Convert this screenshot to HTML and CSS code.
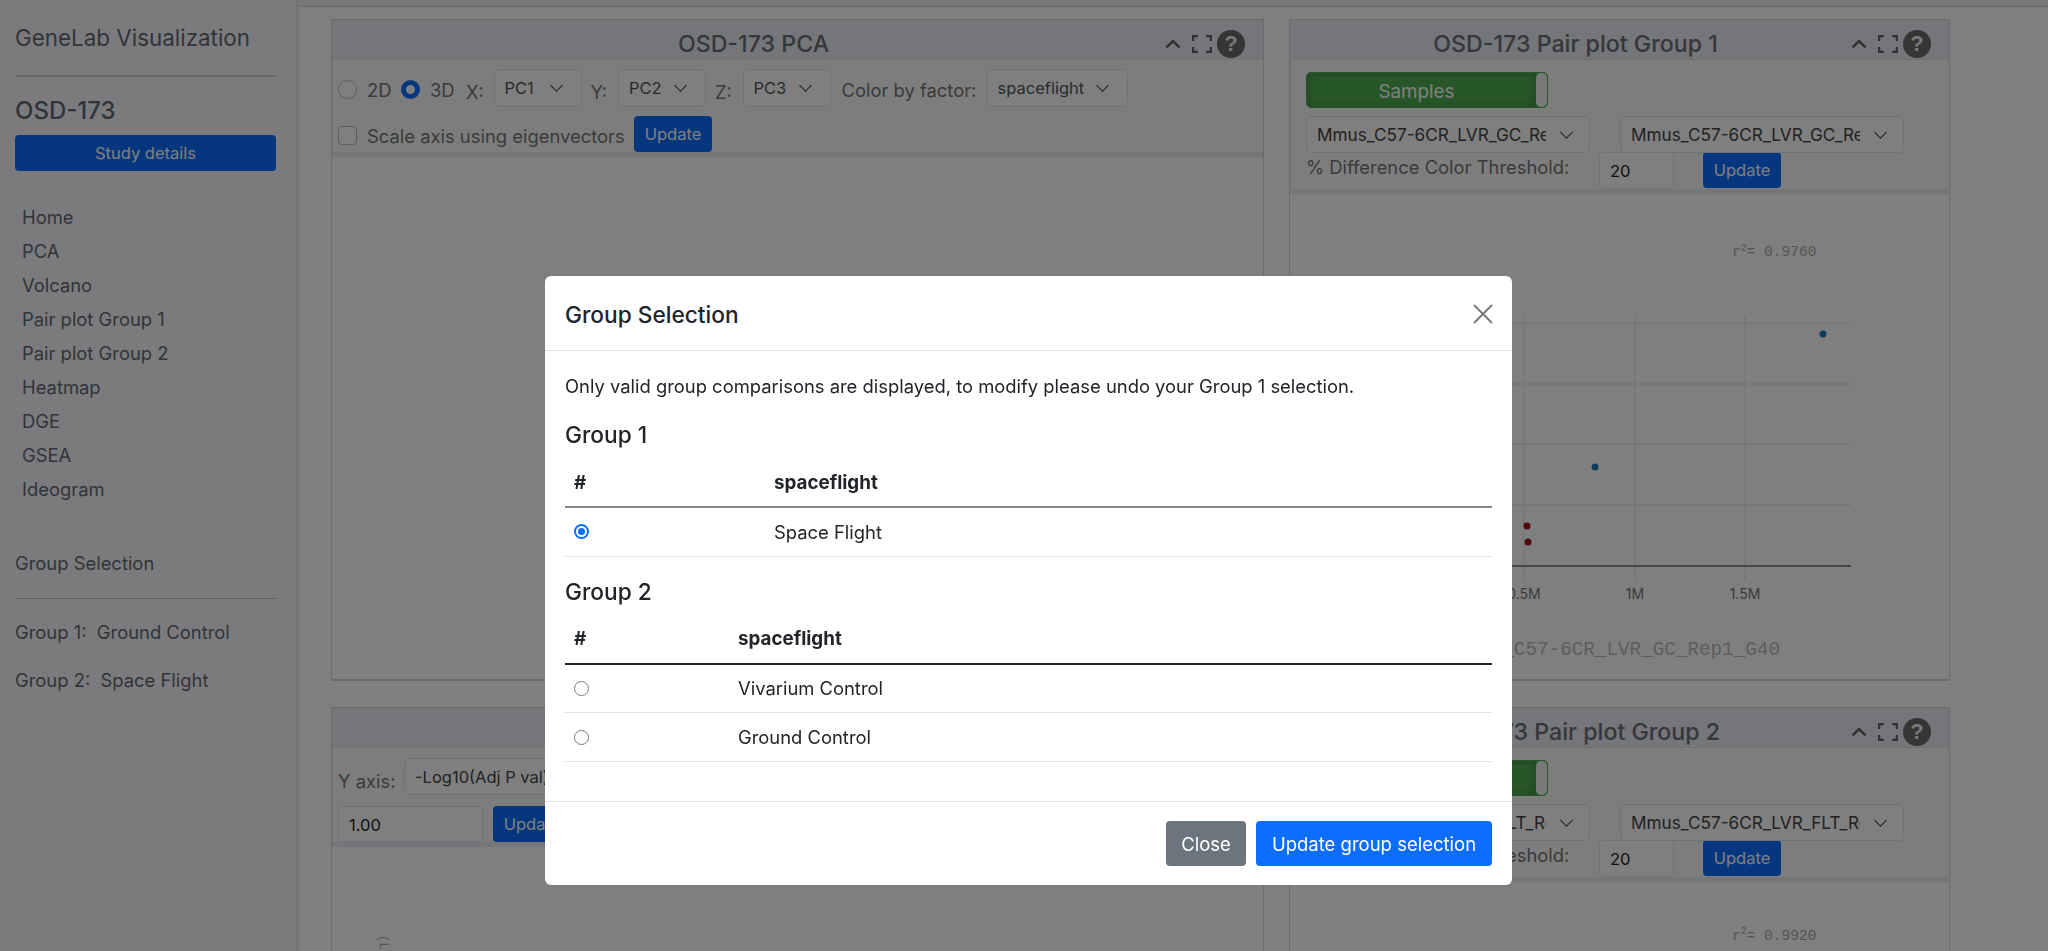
FILE: index.html
```html
<!DOCTYPE html>
<html lang="en">
<head>
    <meta charset="UTF-8">
    <title>GeneLab Visualization</title>
    <link rel="stylesheet" href="styles.css">
</head>
<body>
    <div class="app">
        <nav class="sidebar">
            <div class="brand">GeneLab Visualization</div>
            <hr class="rule">
            <h2 class="study">OSD-173</h2>
            <button class="btn btn-study">Study details</button>
            <ul class="nav-list">
                <li>Home</li>
                <li>PCA</li>
                <li>Volcano</li>
                <li>Pair plot Group 1</li>
                <li>Pair plot Group 2</li>
                <li>Heatmap</li>
                <li>DGE</li>
                <li>GSEA</li>
                <li>Ideogram</li>
            </ul>
            <div class="side-title">Group Selection</div>
            <hr class="rule rule-thin">
            <div class="side-group">Group 1:&nbsp; Ground Control</div>
            <div class="side-group">Group 2:&nbsp; Space Flight</div>
        </nav>

        <main class="content">
            <div class="grid">
                <section class="panel">
                    <header class="panel-head">
                        <span class="panel-title">OSD-173 PCA</span>
                        <span class="panel-icons">
                            <svg class="ico-up" viewBox="0 0 16 10"><path d="M1.5 8.5 8 2l6.5 6.5"/></svg>
                            <svg class="ico-full" viewBox="0 0 20 18"><path d="M1 6V1h5M14 1h5v5M19 12v5h-5M6 17H1v-5"/></svg>
                            <span class="ico-help">?</span>
                        </span>
                    </header>
                    <div class="panel-tools pca-tools">
                        <div class="tool-row">
                            <span class="radio"></span><label class="lbl lbl-2d">2D</label>
                            <span class="radio radio-on"></span><label class="lbl lbl-3d">3D</label>
                            <label class="lbl lbl-axis">X:</label><span class="select s-pc">PC1</span>
                            <label class="lbl lbl-axis">Y:</label><span class="select s-pc">PC2</span>
                            <label class="lbl lbl-axis">Z:</label><span class="select s-pc">PC3</span>
                            <label class="lbl lbl-color">Color by factor:</label><span class="select s-factor">spaceflight</span>
                        </div>
                        <div class="tool-row">
                            <span class="check"></span><label class="lbl lbl-scale">Scale axis using eigenvectors</label>
                            <button class="btn btn-update">Update</button>
                        </div>
                    </div>
                </section>

                <section class="panel">
                    <header class="panel-head">
                        <span class="panel-title">OSD-173 Pair plot Group 1</span>
                        <span class="panel-icons">
                            <svg class="ico-up" viewBox="0 0 16 10"><path d="M1.5 8.5 8 2l6.5 6.5"/></svg>
                            <svg class="ico-full" viewBox="0 0 20 18"><path d="M1 6V1h5M14 1h5v5M19 12v5h-5M6 17H1v-5"/></svg>
                            <span class="ico-help">?</span>
                        </span>
                    </header>
                    <div class="panel-tools pair-tools">
                        <div class="toggle"><span class="toggle-on">Samples</span><span class="toggle-knob"></span></div>
                        <div class="select-row">
                            <span class="select s-sample"><span class="clip">Mmus_C57-6CR_LVR_GC_Rep1_G40</span></span>
                            <span class="select s-sample"><span class="clip">Mmus_C57-6CR_LVR_GC_Rep2_G42</span></span>
                        </div>
                        <div class="thresh-row">
                            <label class="lbl thresh-lbl">% Difference Color Threshold:</label>
                            <span class="input input-small">20</span>
                            <button class="btn btn-update">Update</button>
                        </div>
                    </div>
                    <svg class="plot-svg" viewBox="0 0 660 490">
                        <text x="442" y="62" class="plot-r">r<tspan dy="-5" font-size="10">2</tspan><tspan dy="5">= 0.9760</tspan></text>
                        <path class="plot-grid" d="M180 129H561M180 190H561M180 250H561M180 311H561M234 122V386M345 122V386M455 122V386"/>
                        <path class="plot-axis" d="M180 372H561"/>
                        <circle cx="533" cy="140" r="3.5" class="dot-blue"/>
                        <circle cx="305" cy="273" r="3.5" class="dot-blue"/>
                        <circle cx="237" cy="332" r="3.5" class="dot-red"/>
                        <circle cx="238" cy="348" r="3.5" class="dot-red"/>
                        <text x="234" y="405" class="plot-tick">0.5M</text>
                        <text x="345" y="405" class="plot-tick">1M</text>
                        <text x="455" y="405" class="plot-tick">1.5M</text>
                        <text x="166" y="461" class="plot-name">Mmus_C57-6CR_LVR_GC_Rep1_G40</text>
                    </svg>
                </section>

                <section class="panel">
                    <header class="panel-head">
                        <span class="panel-title">OSD-173 Volcano</span>
                        <span class="panel-icons">
                            <svg class="ico-up" viewBox="0 0 16 10"><path d="M1.5 8.5 8 2l6.5 6.5"/></svg>
                            <svg class="ico-full" viewBox="0 0 20 18"><path d="M1 6V1h5M14 1h5v5M19 12v5h-5M6 17H1v-5"/></svg>
                            <span class="ico-help">?</span>
                        </span>
                    </header>
                    <div class="panel-tools volcano-tools">
                        <div class="tool-row">
                            <label class="lbl lbl-yaxis">Y axis:</label><span class="select s-axis"><span class="clip">-Log10(Adj P val)</span></span>
                        </div>
                        <div class="tool-row">
                            <span class="input input-wide">1.00</span>
                            <button class="btn btn-update">Update</button>
                        </div>
                    </div>
                    <svg class="volcano-svg" viewBox="0 0 60 20">
                        <text x="0" y="0" transform="translate(48 0) rotate(90)" class="plot-side">(L</text>
                    </svg>
                </section>

                <section class="panel">
                    <header class="panel-head">
                        <span class="panel-title">OSD-173 Pair plot Group 2</span>
                        <span class="panel-icons">
                            <svg class="ico-up" viewBox="0 0 16 10"><path d="M1.5 8.5 8 2l6.5 6.5"/></svg>
                            <svg class="ico-full" viewBox="0 0 20 18"><path d="M1 6V1h5M14 1h5v5M19 12v5h-5M6 17H1v-5"/></svg>
                            <span class="ico-help">?</span>
                        </span>
                    </header>
                    <div class="panel-tools pair-tools">
                        <div class="toggle"><span class="toggle-on">Samples</span><span class="toggle-knob"></span></div>
                        <div class="select-row">
                            <span class="select s-sample"><span class="clip">Mmus_C57-6CR_LVR_FLT_Rep1_F1</span></span>
                            <span class="select s-sample"><span class="clip">Mmus_C57-6CR_LVR_FLT_Rep2_F2</span></span>
                        </div>
                        <div class="thresh-row">
                            <label class="lbl thresh-lbl">% Difference Color Threshold:</label>
                            <span class="input input-small">20</span>
                            <button class="btn btn-update">Update</button>
                        </div>
                    </div>
                    <div class="plot-foot">r<sup>2</sup>= 0.9920</div>
                </section>
            </div>
        </main>
    </div>

    <div class="backdrop"></div>

    <div class="modal">
        <header class="modal-head">
            <h3 class="modal-title">Group Selection</h3>
            <svg class="modal-close" viewBox="0 0 20 20"><path d="M1 1l18 18M19 1 1 19"/></svg>
        </header>
        <div class="modal-body">
            <p class="modal-note">Only valid group comparisons are displayed, to modify please undo your Group 1 selection.</p>
            <h4 class="group-title">Group 1</h4>
            <table class="group-table t-one">
                <thead><tr><th class="col-num">#</th><th>spaceflight</th></tr></thead>
                <tbody>
                    <tr><td class="col-num"><span class="mini-radio mini-on"></span></td><td>Space Flight</td></tr>
                </tbody>
            </table>
            <h4 class="group-title">Group 2</h4>
            <table class="group-table t-two">
                <thead><tr><th class="col-num">#</th><th>spaceflight</th></tr></thead>
                <tbody>
                    <tr><td class="col-num"><span class="mini-radio"></span></td><td>Vivarium Control</td></tr>
                    <tr><td class="col-num"><span class="mini-radio"></span></td><td>Ground Control</td></tr>
                </tbody>
            </table>
        </div>
        <footer class="modal-foot">
            <button class="btn btn-close">Close</button>
            <button class="btn btn-primary">Update group selection</button>
        </footer>
    </div>
</body>
</html>
```

FILE: styles.css
```css
* {
    box-sizing: border-box;
}
html, body {
    margin: 0;
    height: 951px;
    overflow: hidden;
}
body {
    font-family: Inter, "Liberation Sans", sans-serif;
    font-size: 18.4px;
    color: #212529;
    background: #fff;
}
.app {
    display: flex;
    height: 951px;
}
.btn {
    border: none;
    border-radius: 4px;
    font-family: inherit;
    color: #fff;
    background: #0d6efd;
}

/* sidebar */
.sidebar {
    width: 299px;
    flex: none;
    padding: 24px 20px 0 15px;
    color: #616a72;
    background: #f6f7fb;
    border-right: 3px solid #e3e4e8;
}
.brand {
    font-size: 22.4px;
    line-height: 28px;
    white-space: nowrap;
}
.rule {
    margin: 23px 0 0;
    border: none;
    border-top: 2px solid #d3d4d8;
}
.rule-thin {
    margin-top: 22px;
    border-top-width: 1px;
    border-top-color: #c8c9cd;
}
.study {
    margin: 19px 0 0;
    font-size: 24px;
    line-height: 30px;
    font-weight: 500;
}
.btn-study {
    display: block;
    width: 100%;
    height: 36px;
    margin-top: 9px;
    font-size: 16.5px;
}
.nav-list {
    list-style: none;
    margin: 29px 0 0;
    padding: 0 0 0 7px;
}
.nav-list li {
    height: 34px;
    line-height: 34px;
    white-space: nowrap;
}
.side-title {
    margin-top: 44px;
    line-height: 26px;
}
.side-group {
    margin-top: 20px;
    line-height: 26px;
    white-space: nowrap;
}
.side-group + .side-group {
    margin-top: 22px;
}

/* panels */
.content {
    flex: 1;
    min-width: 0;
    height: 951px;
    overflow: hidden;
    background: linear-gradient(#f2f2f2 5px, #e0e0e0 5px, #e0e0e0 7px, #fff 7px);
    padding: 19px 0 0 32px;
}
.grid {
    display: grid;
    grid-template-columns: 933px 661px;
    grid-template-rows: 662px 400px;
    column-gap: 25px;
    row-gap: 26px;
}
.panel {
    border: 1px solid #d6d7da;
    border-bottom-width: 2px;
    background: #fff;
    min-width: 0;
}
.panel-head {
    position: relative;
    height: 40px;
    padding: 8px 88px 0 0;
    background: #e9ecf2;
    text-align: center;
    border-bottom: 1px solid #e2e3e6;
}
.panel-title {
    display: block;
    font-size: 23.2px;
    font-weight: 500;
    line-height: 32px;
    white-space: nowrap;
    color: #6c6f74;
}
.panel-icons {
    position: absolute;
    top: 10px;
    right: 18px;
    display: flex;
    align-items: center;
    gap: 5px;
}
.ico-up {
    width: 16px;
    height: 10px;
    margin-right: 6px;
    fill: none;
    stroke: #666;
    stroke-width: 2.5;
}
.ico-full {
    width: 20px;
    height: 18px;
    fill: none;
    stroke: #666;
    stroke-width: 2.5;
}
.ico-help {
    width: 28px;
    height: 28px;
    border-radius: 50%;
    background: #6a6a6a;
    color: #f0f0f0;
    font-weight: 700;
    font-size: 22px;
    line-height: 28px;
    text-align: center;
    font-family: "Liberation Sans", sans-serif;
}
.panel-tools {
    background: #fafafa;
    border-left: 1px solid #e8e8e8;
    border-bottom: 5px solid #e9ecf2;
}
.pca-tools {
    height: 97px;
    padding: 9px 0 0 5px;
}
.tool-row {
    display: flex;
    align-items: center;
    margin-bottom: 9px;
    white-space: nowrap;
}
.lbl {
    flex: none;
    position: relative;
    color: #777;
}
.lbl-2d {
    width: 34px;
    top: 2px;
}
.lbl-3d {
    width: 36px;
    top: 2px;
}
.lbl-axis {
    width: 27.5px;
    top: 4px;
}
.lbl-color {
    width: 145px;
    margin-left: 2px;
    top: 2px;
}
.lbl-scale {
    width: 267px;
    top: 2px;
}
.radio, .check {
    flex: none;
    width: 19px;
    height: 19px;
    margin-right: 10px;
    position: relative;
    top: 1.5px;
    border: 1px solid #bbb;
    border-radius: 50%;
    background: #fff;
}
.radio-on {
    border: 5px solid #0d6efd;
}
.check {
    border-radius: 4px;
}
.select {
    flex: none;
    position: relative;
    display: inline-block;
    height: 38px;
    line-height: 36px;
    padding-left: 10px;
    border: 1px solid #dee2e6;
    border-radius: 5px;
    background: #fff;
    color: #555;
    font-size: 16.5px;
}
.select::after {
    content: "";
    position: absolute;
    top: 11px;
    right: 20px;
    width: 8px;
    height: 8px;
    border-right: 1.5px solid #333;
    border-bottom: 1.5px solid #333;
    transform: rotate(45deg);
}
.s-pc {
    width: 88px;
    margin-right: 9px;
}
.s-factor {
    width: 141px;
}
.clip {
    display: block;
    overflow: hidden;
    white-space: nowrap;
}
.btn-update {
    flex: none;
    width: 78px;
    height: 36px;
    font-size: 16.5px;
}
.pair-tools {
    height: 134px;
    padding: 12px 0 0 15px;
}
.toggle {
    display: flex;
    width: 242px;
    height: 36px;
    border: 1px solid #4fae53;
    border-radius: 5px;
    overflow: hidden;
    background: #4fae53;
}
.toggle-on {
    flex: 1;
    padding-right: 10px;
    box-shadow: inset 0 0 8px rgba(0, 0, 0, 0.25);
    color: #fff;
    text-align: center;
    font-size: 18.8px;
    line-height: 38px;
}
.toggle-knob {
    width: 11px;
    border-radius: 5px;
    background: #f4f4f4;
}
.select-row {
    display: flex;
    gap: 30px;
    height: 36px;
    margin-top: 8px;
}
.s-sample {
    width: 284px;
    height: 37px;
    padding-right: 43px;
    color: #444;
    font-size: 17.2px;
}
.s-sample::after {
    right: 18px;
}
.thresh-row {
    display: flex;
    align-items: flex-start;
}
.thresh-lbl {
    top: 4px;
    width: 293px;
    white-space: nowrap;
}
.input {
    flex: none;
    display: inline-block;
    height: 37px;
    line-height: 37px;
    padding-left: 10px;
    border: 1px solid #dee2e6;
    border-radius: 5px;
    background: #fff;
    font-size: 16.5px;
}
.input-small {
    width: 75px;
    margin-right: 29px;
}
.input-wide {
    width: 145px;
    height: 36px;
    margin-right: 10px;
}
.volcano-tools {
    height: 99px;
    padding: 10px 0 0 5px;
}
.volcano-tools .tool-row {
    height: 37px;
    margin-bottom: 11px;
}
.volcano-tools .tool-row + .tool-row {
    height: 36px;
}
.lbl-yaxis {
    width: 66px;
    top: 4px;
}
.s-axis {
    width: 240px;
    height: 37px;
    padding-right: 60px;
    color: #444;
}
.volcano-svg {
    display: block;
    width: 60px;
    height: 20px;
    margin-top: 88px;
}
.plot-side {
    font-family: "Liberation Mono", monospace;
    font-size: 12px;
    fill: #aaa;
}
.plot-svg {
    display: block;
    width: 660px;
    height: 490px;
}
.plot-grid {
    fill: none;
    stroke: #ececec;
    stroke-width: 1.5;
}
.plot-axis {
    stroke: #666;
    stroke-width: 1.5;
}
.dot-blue {
    fill: #1f77b4;
}
.dot-red {
    fill: #a11414;
}
.plot-r {
    font-family: "Liberation Mono", monospace;
    font-size: 14.5px;
    fill: #aaa;
}
.plot-tick {
    font-family: Inter, "Liberation Sans", sans-serif;
    font-size: 14px;
    text-anchor: middle;
    fill: #777;
}
.plot-name {
    font-family: "Liberation Mono", monospace;
    font-size: 19.3px;
    fill: #bbb;
}
.plot-foot {
    margin: 46px 0 0 442px;
    font-family: "Liberation Mono", monospace;
    font-size: 14.5px;
    line-height: 17px;
    color: #aaa;
}
.plot-foot sup {
    font-size: 10px;
    line-height: 0;
}

/* modal */
.backdrop {
    position: fixed;
    inset: 0;
    background: rgba(0, 0, 0, 0.5);
}
.modal {
    position: fixed;
    top: 276px;
    left: 545px;
    width: 967px;
    height: 609px;
    display: flex;
    flex-direction: column;
    background: #fff;
    border-radius: 6px;
}
.modal-head {
    display: flex;
    align-items: center;
    justify-content: space-between;
    flex: none;
    height: 75px;
    padding: 2px 19px 0 20px;
    border-bottom: 1px solid #dee2e6;
}
.modal-title {
    margin: 0;
    font-size: 22.7px;
    font-weight: 500;
}
.modal-close {
    width: 20px;
    height: 20px;
    fill: none;
    stroke: #777;
    stroke-width: 1.8;
}
.modal-body {
    flex: 1;
    padding: 23px 20px 0;
}
.modal-note {
    margin: 0;
    line-height: 24px;
    white-space: nowrap;
}
.group-title {
    margin: 21px 0 0;
    font-size: 22.7px;
    font-weight: 500;
    line-height: 28px;
}
.modal-note + .group-title {
    margin-top: 23px;
}
.group-table {
    width: 100%;
    margin-top: 9px;
    margin-bottom: 0;
    border-collapse: collapse;
}
.group-table th {
    height: 49px;
    padding: 0 9px;
    text-align: left;
    font-size: 18.8px;
    font-weight: 700;
    border-bottom: 2px solid #212529;
}
.t-one th {
    border-bottom-color: #888;
}
.group-table td {
    height: 49px;
    padding: 0 9px;
    border-bottom: 1px solid #dee2e6;
}
.t-one .col-num {
    width: 200px;
}
.t-two .col-num {
    width: 164px;
}
.mini-radio {
    display: block;
    width: 15px;
    height: 15px;
    border: 1px solid #777;
    border-radius: 50%;
}
.mini-on {
    border: 2px solid #0d6efd;
    padding: 2px;
    background: #0d6efd content-box;
}
.modal-foot {
    display: flex;
    justify-content: flex-end;
    align-items: center;
    flex: none;
    gap: 10px;
    height: 84px;
    padding: 0 20px;
    border-top: 1px solid #dee2e6;
}
.btn-close {
    width: 80px;
    height: 45px;
    font-size: 18.5px;
    background: #6c757d;
}
.btn-primary {
    width: 236px;
    height: 45px;
    font-size: 18.5px;
}
```
